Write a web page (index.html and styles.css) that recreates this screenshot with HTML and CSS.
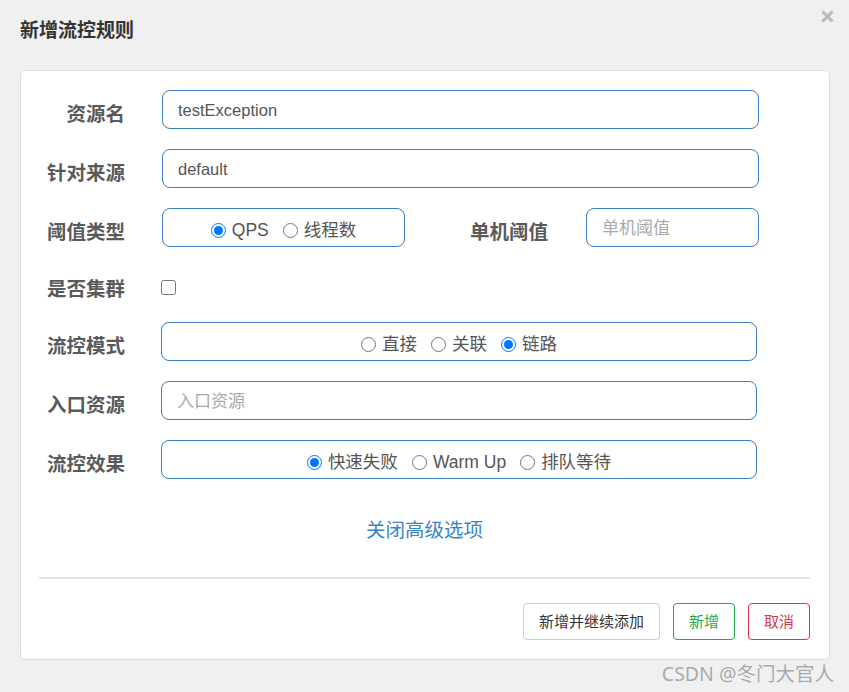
FILE: index.html
```html
<!DOCTYPE html>
<html lang="zh-CN">
<head>
<meta charset="utf-8">
<title>新增流控规则</title>
<link rel="stylesheet" href="styles.css">
</head>
<body>
<div class="dialog">
  <div class="dialog-header">
    <h4 class="dialog-title">新增流控规则</h4>
    <button class="close" aria-label="关闭">
      <svg width="13" height="13" viewBox="0 0 13 13"><path d="M1.5 1.5 L11.5 11.5 M11.5 1.5 L1.5 11.5" stroke="#b9b9b9" stroke-width="3" fill="none"/></svg>
    </button>
  </div>
  <div class="card">
    <form class="form">
      <div class="row">
        <label class="label">资源名</label>
        <div class="control"><input class="input" type="text" value="testException"></div>
      </div>
      <div class="row">
        <label class="label">针对来源</label>
        <div class="control"><input class="input" type="text" value="default"></div>
      </div>
      <div class="row">
        <label class="label">阈值类型</label>
        <div class="control split">
          <div class="radio-group small">
            <label class="radio"><input type="radio" name="grade" checked><span>QPS</span></label>
            <label class="radio"><input type="radio" name="grade"><span>线程数</span></label>
          </div>
          <label class="label inner-label">单机阈值</label>
          <input class="input small-input" type="text" placeholder="单机阈值">
        </div>
      </div>
      <div class="row check-row">
        <label class="label">是否集群</label>
        <div class="control"><input class="checkbox" type="checkbox"></div>
      </div>
      <div class="row">
        <label class="label">流控模式</label>
        <div class="control shifted">
          <div class="radio-group">
            <label class="radio"><input type="radio" name="strategy"><span>直接</span></label>
            <label class="radio"><input type="radio" name="strategy"><span>关联</span></label>
            <label class="radio"><input type="radio" name="strategy" checked><span>链路</span></label>
          </div>
        </div>
      </div>
      <div class="row">
        <label class="label">入口资源</label>
        <div class="control shifted"><input class="input" type="text" placeholder="入口资源"></div>
      </div>
      <div class="row">
        <label class="label">流控效果</label>
        <div class="control shifted">
          <div class="radio-group">
            <label class="radio"><input type="radio" name="behavior" checked><span>快速失败</span></label>
            <label class="radio"><input type="radio" name="behavior"><span>Warm Up</span></label>
            <label class="radio"><input type="radio" name="behavior"><span>排队等待</span></label>
          </div>
        </div>
      </div>
      <div class="toggle-row"><a class="toggle" href="#">关闭高级选项</a></div>
    </form>
    <div class="divider"></div>
    <div class="footer">
      <button class="btn btn-default">新增并继续添加</button>
      <button class="btn btn-success">新增</button>
      <button class="btn btn-danger">取消</button>
    </div>
  </div>
</div>
<div class="watermark">CSDN @冬门大官人</div>
</body>
</html>
```

FILE: styles.css
```css
* { box-sizing: border-box; }
html, body {
  margin: 0;
  padding: 0;
  background: #f0f0f0;
  font-family: "Liberation Sans", "Noto Sans CJK SC", sans-serif;
  color: #555;
}
body {
  width: 849px;
  height: 692px;
  position: relative;
  overflow: hidden;
}
.dialog {
  padding: 0 20px 0 20px;
  position: relative;
}
.dialog-header {
  padding-top: 20px;
  height: 70px;
}
.dialog-title {
  margin: 0;
  font-size: 19px;
  line-height: 22px;
  font-weight: bold;
  color: #333;
}
.close {
  position: absolute;
  top: 10px;
  right: 15px;
  border: 0;
  background: transparent;
  padding: 0;
  width: 13px;
  height: 13px;
  cursor: pointer;
}
.close svg { display: block; }
.card {
  width: 810px;
  background: #fff;
  border: 1px solid #dcdcdc;
  border-radius: 5px;
  padding: 19px 19px 19px 18px;
}
.form { margin: 0; }
.row {
  display: flex;
  align-items: center;
  height: 39px;
  margin-bottom: 20px;
}
.label {
  width: 87px;
  margin-right: 36px;
  padding-right: 1px;
  text-align: right;
  font-size: 19.5px;
  font-weight: bold;
  color: #5a5a5a;
  padding-top: 8px;
  line-height: 24px;
  flex: none;
}
.control {
  width: 597px;
  height: 39px;
  display: flex;
  align-items: center;
}
.control.shifted {
  margin-left: -1px;
  width: 596px;
}
.input {
  width: 100%;
  height: 39px;
  border: 1px solid #3a7dbd;
  border-radius: 8px;
  padding: 2px 15px 0;
  font-family: "Liberation Sans", "Noto Sans CJK SC", sans-serif;
  font-size: 16.5px;
  color: #555;
  background: #fff;
  outline: none;
}
.input::placeholder { color: #a9a9a9; font-size: 17px; }
.split { gap: 0; }
.radio-group {
  flex: 1;
  height: 39px;
  border: 1px solid #3a7dbd;
  border-radius: 8px;
  display: flex;
  align-items: center;
  justify-content: center;
  gap: 14px;
  padding-top: 5px;
}
.radio-group.small {
  flex: none;
  width: 243px;
}
.radio {
  display: flex;
  align-items: center;
  gap: 6px;
  font-size: 17.5px;
  color: #555;
  line-height: 22px;
}
.radio input {
  width: 15px;
  height: 15px;
  margin: 0;
}
.inner-label {
  width: auto;
  flex: 1;
  margin-right: 37px;
}
.small-input {
  width: 173px;
  flex: none;
}
.check-row {
  height: 35px;
}
.check-row .control { height: 35px; }
.checkbox {
  width: 15px;
  height: 15px;
  margin: 5px 0 0 -1px;
}
.toggle-row {
  text-align: center;
  margin-top: 38px;
  line-height: 26px;
}
.toggle {
  font-size: 19.5px;
  color: #3b83c4;
  text-decoration: none;
}
.divider {
  height: 2px;
  background: #e5e5e5;
  margin-top: 32px;
}
.footer {
  display: flex;
  justify-content: flex-end;
  gap: 13px;
  margin-top: 24px;
}
.btn {
  font-family: "Liberation Sans", "Noto Sans CJK SC", sans-serif;
  font-size: 15px;
  line-height: 21px;
  padding: 7px 15px;
  border-radius: 4px;
  background: #fff;
  border: 1px solid #ccc;
  color: #333;
  cursor: pointer;
}
.btn-success { border-color: #28a745; color: #28a745; }
.btn-danger { border-color: #dc3545; color: #dc3545; }
.watermark {
  position: absolute;
  right: 15px;
  bottom: 6px;
  font-family: "Noto Sans", "Noto Sans CJK SC", sans-serif;
  font-size: 19.5px;
  line-height: 24px;
  color: #a8a8a8;
  text-shadow: 0 0 1px #fff;
}
```
